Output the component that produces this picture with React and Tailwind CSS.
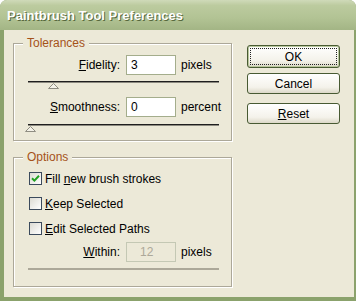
import React from "react";

function Slider({ left }) {
  return (
    <div className="relative ml-[14px] h-[16px] w-[191px]">
      <div className="h-px bg-[#1f1f1f]" />
      <div className="h-px bg-[#8c8a80]" />
      <svg
        className="absolute top-[2px]"
        style={{ left }}
        width="11"
        height="7"
        viewBox="0 0 11 7"
      >
        <polygon
          points="5.5,0.5 10.5,5.5 0.5,5.5"
          fill="#f4f2e8"
          stroke="#8f8d82"
          strokeWidth="1"
        />
      </svg>
    </div>
  );
}

function Field({ label, value, unit, disabled }) {
  return (
    <div className="flex h-[20px] items-center">
      <div className="w-[106px] text-right">{label}</div>
      <div
        className={
          disabled
            ? "ml-[6px] flex h-[20px] w-[50px] items-center border border-[#c4c8b4] bg-[#ece9d8] pl-[13px] text-[#aca899]"
            : "ml-[6px] flex h-[20px] w-[50px] items-center border border-[#a4ad8c] bg-white pl-[4px]"
        }
      >
        {value}
      </div>
      <div className="ml-[5px]">{unit}</div>
    </div>
  );
}

function Check({ checked, children }) {
  return (
    <div className="flex h-[13px] items-center pl-[15px]">
      <div className="flex h-[13px] w-[13px] items-center justify-center border border-[#3b4a5c] bg-[linear-gradient(135deg,#dcdbd3,#ffffff)]">
        {checked && (
          <svg width="9" height="9" viewBox="0 0 9 9">
            <path
              d="M1 4.2 L3.4 6.6 L8 1.8"
              fill="none"
              stroke="#21a121"
              strokeWidth="2"
            />
          </svg>
        )}
      </div>
      <div className="ml-[3px]">{children}</div>
    </div>
  );
}

function GroupBox({ title, className, children }) {
  return (
    <div
      className={
        "relative w-[219px] border border-[#aca899] shadow-[inset_1px_1px_0_#fff,1px_1px_0_#fff] " +
        className
      }
    >
      <span className="absolute -top-[8px] left-[9px] bg-[#ece9d8] px-[4px] leading-[14px] text-[#a5521a]">
        {title}
      </span>
      {children}
    </div>
  );
}

function Button({ children, primary, className }) {
  return (
    <div
      className={
        "flex w-[93px] items-center justify-center rounded-[3px] border border-[#485a33] bg-[linear-gradient(to_bottom,#ffffff,#f4f2ea_70%,#dcd8c8)] " +
        (primary
          ? "shadow-[inset_0_0_0_1px_#b9c79c] outline-1 -outline-offset-4 outline-dotted outline-[#222] "
          : "") +
        className
      }
    >
      {children}
    </div>
  );
}

export default function App() {
  return (
    <div className="h-[301px] w-[356px] bg-white font-['Liberation_Sans',Arial,sans-serif] text-[12px] text-black">
      <div className="flex h-full flex-col overflow-hidden rounded-t-[7px] bg-[#8ba26c]">
        <div className="flex h-[30px] items-center bg-[linear-gradient(to_bottom,#cfdab9_0%,#bccb9f_18%,#b2c394_60%,#a3b585_100%)] pl-[7px] pt-[1px] text-[13px] font-bold text-white [text-shadow:1px_1px_0_#56683d]">
          Paintbrush Tool Preferences
        </div>
        <div className="flex flex-1 border-b-4 border-l-4 border-r-2 border-[#8ba26c] bg-[#ece9d8]">
          <div className="flex flex-col pl-[9px] pt-[13px]">
            <GroupBox title="Tolerances" className="h-[98px]">
              <div className="pt-[11px]">
                <Field
                  label={
                    <>
                      <u>F</u>idelity:
                    </>
                  }
                  value="3"
                  unit="pixels"
                />
                <div className="mt-[6px]">
                  <Slider left="20px" />
                </div>
                <Field
                  label={
                    <>
                      <u>S</u>moothness:
                    </>
                  }
                  value="0"
                  unit="percent"
                />
                <div className="mt-[7px]">
                  <Slider left="-3px" />
                </div>
              </div>
            </GroupBox>
            <GroupBox title="Options" className="mt-[16px] h-[130px]">
              <div className="flex flex-col gap-[12px] pt-[14px]">
                <Check checked>
                  Fill <u>n</u>ew brush strokes
                </Check>
                <Check>
                  <u>K</u>eep Selected
                </Check>
                <Check>
                  <u>E</u>dit Selected Paths
                </Check>
              </div>
              <div className="mt-[7px]">
                <Field
                  label={
                    <>
                      <u>W</u>ithin:
                    </>
                  }
                  value="12"
                  unit="pixels"
                  disabled
                />
              </div>
              <div className="ml-[14px] mt-[6px] h-[2px] w-[191px] bg-[#aca899]" />
            </GroupBox>
          </div>
          <div className="flex flex-col pl-[15px] pt-[15px]">
            <Button primary className="h-[23px]">
              OK
            </Button>
            <Button className="mt-[5px] h-[21px]">Cancel</Button>
            <Button className="mt-[9px] h-[21px]">
              <span>
                <u>R</u>eset
              </span>
            </Button>
          </div>
        </div>
      </div>
    </div>
  );
}
